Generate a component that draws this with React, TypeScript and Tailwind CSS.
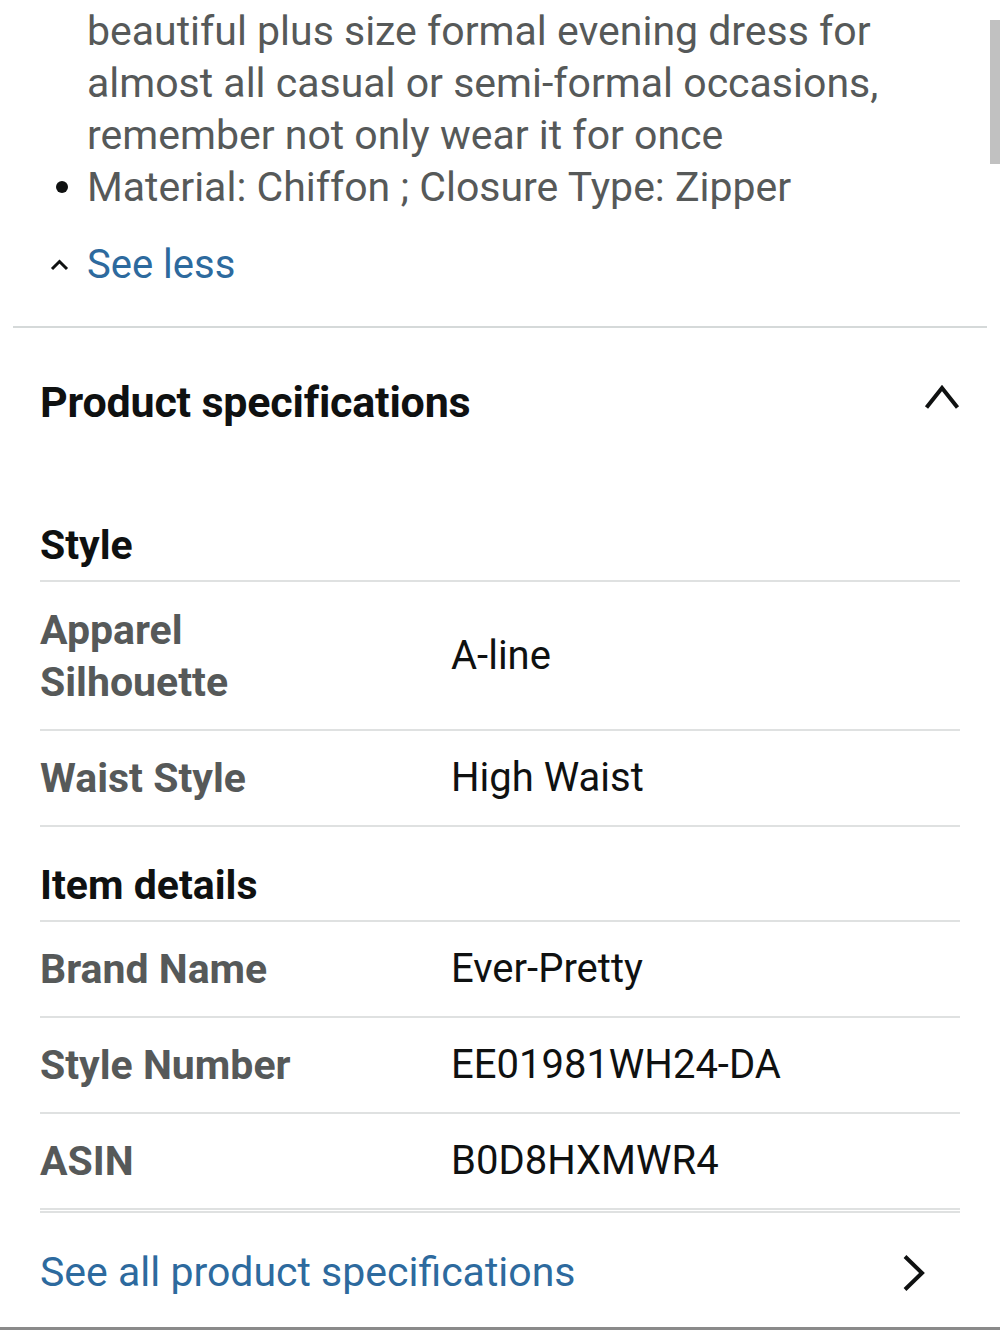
const specs = [
  {
    title: "Style",
    rows: [
      { label: "Apparel Silhouette", value: "A-line", tall: true },
      { label: "Waist Style", value: "High Waist" },
    ],
  },
  {
    title: "Item details",
    rows: [
      { label: "Brand Name", value: "Ever-Pretty" },
      { label: "Style Number", value: "EE01981WH24-DA" },
      { label: "ASIN", value: "B0D8HXMWR4" },
    ],
  },
];

const App = () => {
  return (
    <div className="relative w-[1000px] h-[1330px] overflow-hidden bg-white font-['Roboto',sans-serif]">
      {/* scrollbar */}
      <div className="absolute right-0 top-[20px] w-[10px] h-[144px] bg-[#c1c1c1]" />

      {/* bullets */}
      <div className="pt-[5px] text-[41px] leading-[52px] text-[#565959]">
        <p className="pl-[87px]">beautiful plus size formal evening dress for</p>
        <p className="pl-[87px]">almost all casual or semi-formal occasions,</p>
        <p className="pl-[87px]">remember not only wear it for once</p>
        <div className="flex items-center">
          <span className="ml-[56px] mr-[19px] w-[12px] h-[12px] rounded-full bg-[#0f1111]" />
          <span>Material: Chiffon ; Closure Type: Zipper</span>
        </div>
      </div>

      <div className="mt-[26px] flex items-center h-[52px] pl-[50px]">
        <svg width="19" height="14" viewBox="0 0 19 14" className="mr-[18px]">
          <path d="M2 11 L9.5 3.5 L17 11" fill="none" stroke="#0f1111" strokeWidth="3" />
        </svg>
        <span className="text-[40px] text-[#2d6a9e]">See less</span>
      </div>

      <div className="mt-[35px] mx-[13px] h-[2px] bg-[#d5d9d9]" />

      <div className="mt-[44px] flex items-center justify-between h-[60px] pl-[40px] pr-[40px]">
        <h2 className="text-[43px] font-bold tracking-[-0.2px] text-[#0f1111]">Product specifications</h2>
        <svg width="36" height="26" viewBox="0 0 36 26" className="-mt-[10px]">
          <path d="M2.5 23.5 L18 4 L33.5 23.5" fill="none" stroke="#0f1111" strokeWidth="4" />
        </svg>
      </div>

      <div className="mx-[40px] mt-[55px]">
        {specs.map((sec) => (
          <div key={sec.title}>
            <div className="h-[95px] flex items-end pb-[10px] border-b-2 border-[#dfe1e1]">
              <h3 className="text-[41px] leading-[50px] font-bold text-[#0f1111]">{sec.title}</h3>
            </div>
            {sec.rows.map((r) => (
              <div
                key={r.label}
                className={`flex items-center border-b-2 border-[#dfe1e1] ${r.tall ? "h-[149px]" : "h-[96px]"}`}
              >
                <div className="w-[411px] text-[41px] leading-[52px] font-bold text-[#565959]">
                  {r.tall ? (
                    <>
                      Apparel
                      <br />
                      Silhouette
                    </>
                  ) : (
                    r.label
                  )}
                </div>
                <div className="text-[40px] text-[#0f1111]">{r.value}</div>
              </div>
            ))}
          </div>
        ))}
        <div className="h-[2px] mt-[1px] bg-[#dfe1e1]" />
      </div>

      <div className="mt-[30px] flex items-center justify-between h-[60px] pl-[40px] pr-[74px]">
        <span className="text-[41px] text-[#2d6a9e]">See all product specifications</span>
        <svg width="24" height="38" viewBox="0 0 24 38">
          <path d="M3 2.5 L20 19 L3 35.5" fill="none" stroke="#0f1111" strokeWidth="4" />
        </svg>
      </div>

      <div className="absolute left-0 bottom-0 w-full h-[3px] bg-[#8a8a8a]" />
    </div>
  );
};

export default App;
